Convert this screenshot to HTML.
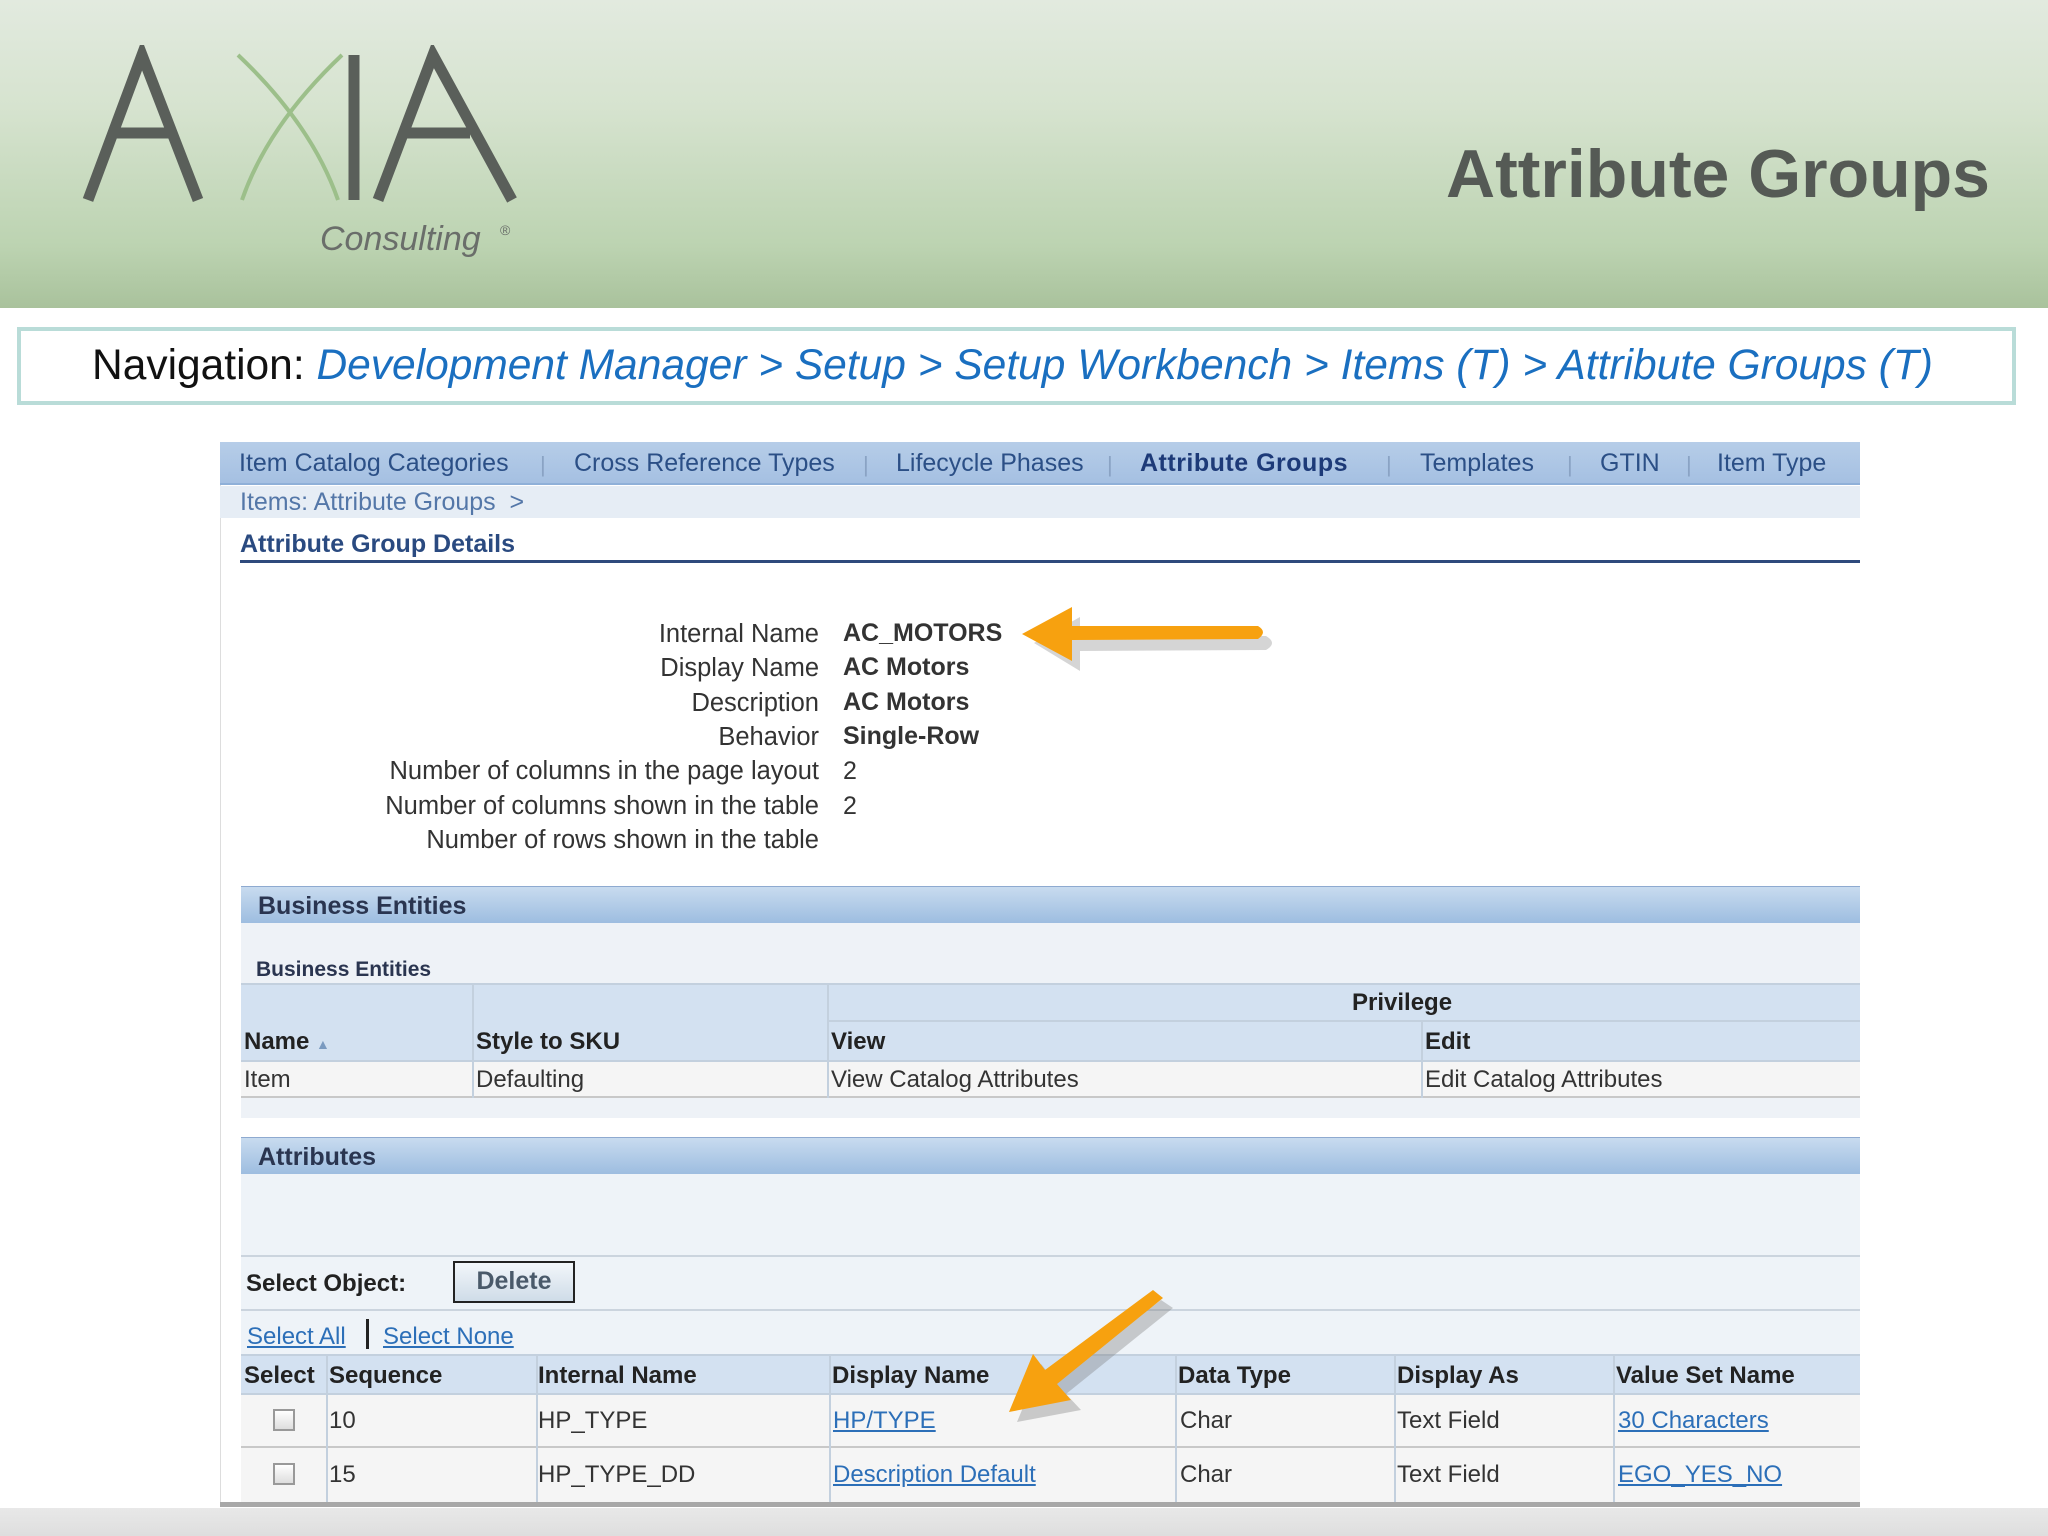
<!DOCTYPE html>
<html><head><meta charset="utf-8">
<style>
*{margin:0;padding:0;box-sizing:border-box}
body{width:2048px;height:1536px;position:relative;overflow:hidden;background:#fff;font-family:"Liberation Sans",sans-serif;color:#222}
.a{position:absolute;white-space:nowrap}
#hdr{left:0;top:0;width:2048px;height:308px;background:linear-gradient(#e2eadf 0%,#d6e3cf 35%,#bcd3b1 80%,#a9c29c 100%)}
#bot{left:0;top:1508px;width:2048px;height:28px;background:linear-gradient(#e8e8e8,#dedede)}
.tab{top:449px;font-size:25px;color:#2b4f86}
.sep{top:452px;font-size:22px;color:#8aa3c4}
.lbl{font-size:25.5px;color:#333;text-align:right;right:1229px}
.val{font-size:25px;left:843px;font-weight:bold;color:#333}
.bar{left:241px;width:1619px;height:37px;background:linear-gradient(#c8dbef,#9dbde0);border-top:1px solid #8eaad0}
.bar span{position:absolute;left:17px;top:5px;font-size:25px;font-weight:bold;color:#2a3550}
.th{font-size:24px;font-weight:bold;color:#222}
.td{font-size:24px;color:#333}
.lk{font-size:24px;color:#2c6fb8;text-decoration:underline}
.vl{position:absolute;width:2px;background:#c3d0de}
.cb{position:absolute;width:22px;height:22px;border:2px solid #999;background:linear-gradient(#fff,#ddd)}
</style></head><body>
<div id="hdr" class="a"></div>
<svg class="a" style="left:80px;top:45px" width="460" height="220" viewBox="0 0 460 220">
<g stroke="#5a5f5a" stroke-width="11" fill="none">
<path d="M8 155 L62 10 L118 155"/><path d="M35 88 L92 88"/>
<path d="M274 10 L274 155"/>
<path d="M298 155 L353 10 L432 155"/><path d="M325 88 L390 88"/>
</g>
<g stroke="#9cbf8a" stroke-width="4" fill="none">
<path d="M158 10 Q232 80 258 155"/><path d="M262 10 Q188 80 162 155"/>
</g>
<text x="240" y="205" font-family="Liberation Sans,sans-serif" font-style="italic" font-size="34" fill="#6a6e6a">Consulting</text>
<text x="420" y="190" font-size="14" fill="#6a6e6a" font-family="Liberation Sans,sans-serif">®</text>
</svg>
<div class="a" style="right:58px;top:135px;font-size:68px;font-weight:bold;color:#555a55">Attribute Groups</div>

<div class="a" style="left:17px;top:327px;width:1999px;height:78px;border:4px solid #b9dcd8;background:#fff"></div>
<div class="a" style="left:92px;top:342px;font-size:42.5px;color:#111">Navigation: <i style="color:#1a6fc0">Development Manager &gt; Setup &gt; Setup Workbench &gt; Items (T) &gt; Attribute Groups (T)</i></div>

<div class="a" style="left:220px;top:442px;width:1640px;height:1064px;background:#fff;border-left:1px solid #ddd"></div>
<div class="a" style="left:220px;top:442px;width:1640px;height:43px;background:linear-gradient(#b6cde8,#a5c0e2);border-bottom:2px solid #8fb0d8"></div>
<div class="a tab" style="left:239px">Item Catalog Categories</div>
<div class="a sep" style="left:540px">|</div>
<div class="a tab" style="left:574px">Cross Reference Types</div>
<div class="a sep" style="left:863px">|</div>
<div class="a tab" style="left:896px">Lifecycle Phases</div>
<div class="a sep" style="left:1107px">|</div>
<div class="a tab" style="left:1140px;font-weight:bold;color:#1d3a78;letter-spacing:0.5px">Attribute Groups</div>
<div class="a sep" style="left:1386px">|</div>
<div class="a tab" style="left:1420px">Templates</div>
<div class="a sep" style="left:1567px">|</div>
<div class="a tab" style="left:1600px">GTIN</div>
<div class="a sep" style="left:1686px">|</div>
<div class="a tab" style="left:1717px">Item Type</div>
<div class="a" style="left:220px;top:486px;width:1640px;height:32px;background:#e6edf5"></div>
<div class="a" style="left:240px;top:488px;font-size:25px;color:#5477a8">Items: Attribute Groups &nbsp;&gt;</div>
<div class="a" style="left:240px;top:530px;font-size:25px;font-weight:bold;color:#2a4a80">Attribute Group Details</div>
<div class="a" style="left:240px;top:560px;width:1620px;height:3px;background:#2e4a7c"></div>

<div class="a lbl" style="top:620px">Internal Name</div><div class="a val" style="top:619px">AC_MOTORS</div>
<div class="a lbl" style="top:654px">Display Name</div><div class="a val" style="top:653px">AC Motors</div>
<div class="a lbl" style="top:689px">Description</div><div class="a val" style="top:688px">AC Motors</div>
<div class="a lbl" style="top:723px">Behavior</div><div class="a val" style="top:722px">Single-Row</div>
<div class="a lbl" style="top:757px">Number of columns in the page layout</div><div class="a val" style="top:757px;font-weight:normal">2</div>
<div class="a lbl" style="top:792px">Number of columns shown in the table</div><div class="a val" style="top:792px;font-weight:normal">2</div>
<div class="a lbl" style="top:826px">Number of rows shown in the table</div>

<svg class="a" style="left:1010px;top:595px" width="280" height="90">
<path d="M18 40 L64 14 L64 32 L250 33 Q262 40 250 47 L64 48 L64 68 Z" fill="#888" opacity=".35" transform="translate(6,8)"/>
<path d="M12 39 L62 12 L62 31 L248 31 Q258 37 248 44 L62 45 L62 66 Z" fill="#f7a10f"/>
</svg>

<div class="a bar" style="top:886px"><span>Business Entities</span></div>
<div class="a" style="left:241px;top:923px;width:1619px;height:195px;background:#eef2f7"></div>
<div class="a" style="left:256px;top:958px;font-size:21px;font-weight:bold;color:#2a3550">Business Entities</div>
<div class="a" style="left:241px;top:983px;width:1619px;height:77px;background:#d3e1f1;border-top:2px solid #c3d0de"></div>
<div class="a" style="left:828px;top:1020px;width:1032px;height:2px;background:#c3d0de"></div>
<div class="a" style="left:241px;top:1060px;width:1619px;height:38px;background:#f5f5f5;border-top:2px solid #c3d0de;border-bottom:2px solid #c8c8c8"></div>
<div class="vl" style="left:472px;top:983px;height:115px"></div>
<div class="vl" style="left:827px;top:983px;height:115px"></div>
<div class="vl" style="left:1421px;top:1020px;height:78px"></div>
<div class="a th" style="left:1352px;top:989px">Privilege</div>
<div class="a th" style="left:244px;top:1028px">Name <span style="font-size:14px;color:#7a9ac0">▲</span></div>
<div class="a th" style="left:476px;top:1028px">Style to SKU</div>
<div class="a th" style="left:831px;top:1028px">View</div>
<div class="a th" style="left:1425px;top:1028px">Edit</div>
<div class="a td" style="left:244px;top:1066px">Item</div>
<div class="a td" style="left:476px;top:1066px">Defaulting</div>
<div class="a td" style="left:831px;top:1066px">View Catalog Attributes</div>
<div class="a td" style="left:1425px;top:1066px">Edit Catalog Attributes</div>

<div class="a bar" style="top:1137px"><span>Attributes</span></div>
<div class="a" style="left:241px;top:1174px;width:1619px;height:330px;background:#eef3f8"></div>
<div class="a" style="left:241px;top:1255px;width:1619px;height:2px;background:#cbd4de"></div>
<div class="a th" style="left:246px;top:1270px">Select Object:</div>
<div class="a" style="left:453px;top:1261px;width:122px;height:42px;border:2px solid #222;background:linear-gradient(#f2f6fa,#cfdce8);font-size:25px;font-weight:bold;color:#4a5a6a;text-align:center;line-height:37px">Delete</div>
<div class="a" style="left:241px;top:1309px;width:1619px;height:2px;background:#cbd4de"></div>
<div class="a lk" style="left:247px;top:1323px">Select All</div>
<div class="a" style="left:366px;top:1319px;width:3px;height:30px;background:#222"></div>
<div class="a lk" style="left:383px;top:1323px">Select None</div>
<div class="a" style="left:241px;top:1354px;width:1619px;height:39px;background:#d3e1f1;border-top:2px solid #c3d0de"></div>
<div class="a" style="left:241px;top:1393px;width:1619px;height:111px;background:#f5f5f5;border-top:2px solid #c3d0de"></div>
<div class="a" style="left:241px;top:1446px;width:1619px;height:2px;background:#c8c8c8"></div>
<div class="vl" style="left:326px;top:1354px;height:150px"></div>
<div class="vl" style="left:536px;top:1354px;height:150px"></div>
<div class="vl" style="left:829px;top:1354px;height:150px"></div>
<div class="vl" style="left:1175px;top:1354px;height:150px"></div>
<div class="vl" style="left:1394px;top:1354px;height:150px"></div>
<div class="vl" style="left:1613px;top:1354px;height:150px"></div>
<div class="a th" style="left:244px;top:1362px">Select</div>
<div class="a th" style="left:329px;top:1362px">Sequence</div>
<div class="a th" style="left:538px;top:1362px">Internal Name</div>
<div class="a th" style="left:832px;top:1362px">Display Name</div>
<div class="a th" style="left:1178px;top:1362px">Data Type</div>
<div class="a th" style="left:1397px;top:1362px">Display As</div>
<div class="a th" style="left:1616px;top:1362px">Value Set Name</div>
<div class="cb" style="left:273px;top:1409px"></div>
<div class="a td" style="left:329px;top:1407px">10</div>
<div class="a td" style="left:538px;top:1407px">HP_TYPE</div>
<div class="a lk" style="left:833px;top:1407px">HP/TYPE</div>
<div class="a td" style="left:1180px;top:1407px">Char</div>
<div class="a td" style="left:1397px;top:1407px">Text Field</div>
<div class="a lk" style="left:1618px;top:1407px">30 Characters</div>
<div class="cb" style="left:273px;top:1463px"></div>
<div class="a td" style="left:329px;top:1461px">15</div>
<div class="a td" style="left:538px;top:1461px">HP_TYPE_DD</div>
<div class="a lk" style="left:833px;top:1461px">Description Default</div>
<div class="a td" style="left:1180px;top:1461px">Char</div>
<div class="a td" style="left:1397px;top:1461px">Text Field</div>
<div class="a lk" style="left:1618px;top:1461px">EGO_YES_NO</div>
<div class="a" style="left:220px;top:1502px;width:1640px;height:5px;background:#a8a8a8"></div>
<div id="bot" class="a"></div>

<svg class="a" style="left:995px;top:1280px" width="200" height="150">
<path d="M160 14 L172 22 L65 108 L80 124 L16 136 L40 78 L53 94 Z" fill="#777" opacity=".35" transform="translate(6,6)"/>
<path d="M158 10 L168 18 L62 104 L76 120 L14 132 L38 74 L50 90 Z" fill="#f7a10f"/>
</svg>
</body></html>
